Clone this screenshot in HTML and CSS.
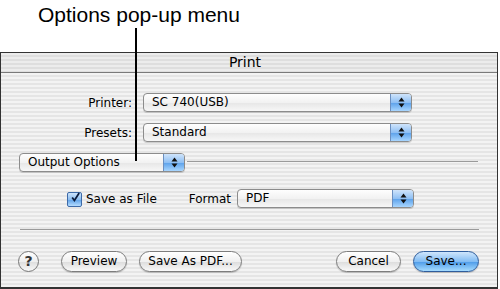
FILE: index.html
```html
<!DOCTYPE html>
<html lang="en">

<head>
    <meta charset="UTF-8">
    <meta name="viewport" content="width=device-width, initial-scale=1.0">
    <title>Print</title>
    <link rel="stylesheet" href="styles.css">
</head>

<body>
    <div class="caption">Options pop-up menu</div>
    <div class="pointer"></div>

    <div class="window">
        <div class="titlebar">Print</div>

        <div class="panel">
            <div class="field">
                <span class="label">Printer:</span>
                <div class="popup wide">
                    <span class="popup-text">SC 740(USB)</span>
                    <span class="arrows">
                        <svg width="7" height="11" viewBox="0 0 7 11"><path d="M3.5 0.5 L6.5 4.5 L0.5 4.5 Z M3.5 10.5 L6.5 6.5 L0.5 6.5 Z" fill="#111"/></svg>
                    </span>
                </div>
            </div>

            <div class="field">
                <span class="label">Presets:</span>
                <div class="popup wide">
                    <span class="popup-text">Standard</span>
                    <span class="arrows">
                        <svg width="7" height="11" viewBox="0 0 7 11"><path d="M3.5 0.5 L6.5 4.5 L0.5 4.5 Z M3.5 10.5 L6.5 6.5 L0.5 6.5 Z" fill="#111"/></svg>
                    </span>
                </div>
            </div>

            <div class="options-row">
                <div class="popup options">
                    <span class="popup-text">Output Options</span>
                    <span class="arrows">
                        <svg width="7" height="11" viewBox="0 0 7 11"><path d="M3.5 0.5 L6.5 4.5 L0.5 4.5 Z M3.5 10.5 L6.5 6.5 L0.5 6.5 Z" fill="#111"/></svg>
                    </span>
                </div>
                <div class="rule"></div>
            </div>

            <div class="file-row">
                <span class="checkbox">
                    <svg width="15" height="15" viewBox="0 0 15 15"><path d="M3 7.5 L6 11.5 L12.5 1.5" fill="none" stroke="#0a1a3a" stroke-width="2.4"/></svg>
                </span>
                <span class="check-label">Save as File</span>
                <span class="format-label">Format</span>
                <div class="popup format">
                    <span class="popup-text">PDF</span>
                    <span class="arrows">
                        <svg width="7" height="11" viewBox="0 0 7 11"><path d="M3.5 0.5 L6.5 4.5 L0.5 4.5 Z M3.5 10.5 L6.5 6.5 L0.5 6.5 Z" fill="#111"/></svg>
                    </span>
                </div>
            </div>

            <div class="separator"></div>

            <div class="buttons">
                <span class="help">?</span>
                <span class="btn preview">Preview</span>
                <span class="btn pdf">Save As PDF...</span>
                <span class="spacer"></span>
                <span class="btn cancel">Cancel</span>
                <span class="btn save">Save...</span>
            </div>
        </div>
    </div>
</body>

</html>
```

FILE: styles.css
```css
body {
    margin: 0;
    width: 500px;
    height: 289px;
    background: #fff;
    font-family: "DejaVu Sans", sans-serif;
    font-size: 12px;
    color: #000;
    position: relative;
    overflow: hidden;
}

.caption {
    height: 52px;
    box-sizing: border-box;
    padding: 3px 0 0 38px;
    font-family: "Liberation Sans", Arial, sans-serif;
    font-size: 21px;
    line-height: 24px;
    color: #000;
}

/* annotation line pointing at the pop-up */
.pointer {
    position: absolute;
    left: 135px;
    top: 28px;
    width: 2px;
    height: 133px;
    background: #000;
    z-index: 2;
}

.window {
    width: 498px;
    height: 237px;
    box-sizing: border-box;
    border: 1px solid #333;
    border-bottom-width: 2px;
    display: flex;
    flex-direction: column;
}

.titlebar {
    height: 19px;
    line-height: 19px;
    text-align: center;
    font-size: 14px;
    padding-right: 8px;
    border-bottom: 1px solid #7a7a7a;
    background: repeating-linear-gradient(to bottom, #ececec 0, #ececec 2px, #dedede 2px, #dedede 4px);
}

.panel {
    flex: 1;
    padding-top: 20px;
    background: repeating-linear-gradient(to bottom, #f3f3f3 0, #f3f3f3 2px, #e5e5e5 2px, #e5e5e5 4px);
}

.field {
    display: flex;
    align-items: center;
    height: 19px;
    margin-bottom: 11px;
}

.label {
    width: 131px;
    text-align: right;
    margin-right: 11px;
}

.popup {
    height: 19px;
    box-sizing: border-box;
    border: 1px solid #8c8c8c;
    border-radius: 4px;
    display: flex;
    align-items: center;
    background: linear-gradient(to bottom, #fefefe 0%, #f2f2f2 50%, #e6e6e6 51%, #f7f7f7 100%);
    box-shadow: 0 1px 0 rgba(0, 0, 0, 0.15);
}

.popup-text {
    flex: 1;
    padding-left: 8px;
    line-height: 17px;
}

.arrows {
    width: 20px;
    height: 17px;
    display: flex;
    align-items: center;
    justify-content: center;
    border-left: 1px solid #6b8fc0;
    border-radius: 0 3px 3px 0;
    background: linear-gradient(to bottom, #cfe4fb 0%, #8fc0f4 50%, #5aa0ea 51%, #a8d6ff 100%);
}

.wide {
    width: 269px;
}

.options-row {
    display: flex;
    align-items: center;
    height: 19px;
    padding-left: 18px;
}

.options {
    width: 166px;
}

.rule {
    width: 291px;
    height: 1px;
    margin-left: 2px;
    margin-top: -3px;
    background: #9a9a9a;
}

.file-row {
    display: flex;
    align-items: center;
    height: 19px;
    margin-top: 17px;
    padding-left: 66px;
}

.checkbox {
    width: 15px;
    height: 15px;
    box-sizing: border-box;
    border: 1px solid #3d6aa8;
    border-radius: 2px;
    background: linear-gradient(to bottom, #cde4fb 0%, #8cbdf0 50%, #5c9fe6 51%, #b4dcff 100%);
    display: flex;
    align-items: center;
    justify-content: center;
    margin-top: 1px;
}

.checkbox svg {
    margin-top: -3px;
    margin-left: 2px;
}

.check-label {
    margin-left: 4px;
}

.format-label {
    margin-left: 32px;
}

.format {
    width: 177px;
    margin-left: 6px;
}

.separator {
    height: 1px;
    margin: 21px 18px 0 19px;
    background: #9a9a9a;
}

.buttons {
    display: flex;
    align-items: center;
    height: 21px;
    margin-top: 21px;
    padding: 0 18px 0 17px;
}

.help {
    width: 21px;
    height: 21px;
    box-sizing: border-box;
    border: 1px solid #777;
    border-radius: 50%;
    text-align: center;
    line-height: 19px;
    font-size: 14px;
    font-weight: bold;
    color: #333;
    background: linear-gradient(to bottom, #ffffff 0%, #eeeeee 50%, #dddddd 51%, #f8f8f8 100%);
}

.btn {
    height: 21px;
    box-sizing: border-box;
    border: 1px solid #7d7d7d;
    border-radius: 11px;
    text-align: center;
    line-height: 19px;
    background: linear-gradient(to bottom, #ffffff 0%, #f0f0f0 50%, #dcdcdc 51%, #f9f9f9 100%);
    box-shadow: 0 1px 1px rgba(0, 0, 0, 0.2);
}

.preview {
    width: 66px;
    margin-left: 22px;
}

.pdf {
    width: 103px;
    margin-left: 12px;
}

.spacer {
    flex: 1;
}

.cancel {
    width: 65px;
}

.save {
    width: 66px;
    margin-left: 12px;
    border-color: #2f5d9c;
    background: linear-gradient(to bottom, #cfe6fc 0%, #82bcf3 50%, #4c9ae8 51%, #a6dcff 100%);
}
```
